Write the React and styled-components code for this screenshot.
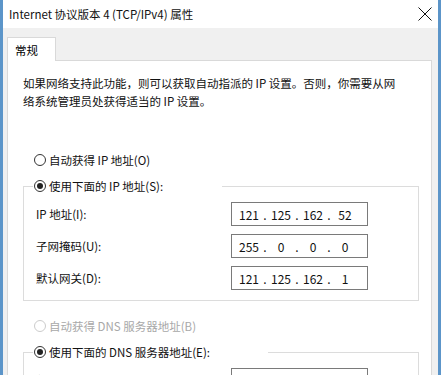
import React from 'react';
import styled, { createGlobalStyle } from 'styled-components';

const GlobalStyle = createGlobalStyle`
  html, body {
    margin: 0;
    padding: 0;
    background: #ffffff;
  }
  body {
    font-family: "Noto Sans CJK SC", "Noto Sans", sans-serif;
    color: #000;
  }
`;

const ipRows = [
  { label: 'IP 地址(I):', value: ['121', '125', '162', '52'] },
  { label: '子网掩码(U):', value: ['255', '0', '0', '0'] },
  { label: '默认网关(D):', value: ['121', '125', '162', '1'] },
];

const dnsRows = [
  { label: '首选 DNS 服务器(P):', value: null },
];

const CloseIcon = () => (
  <svg width="14" height="14" viewBox="0 0 14 14">
    <path d="M0.5 0.5 L13.5 13.5 M13.5 0.5 L0.5 13.5" stroke="#111" strokeWidth="1" fill="none" />
  </svg>
);

const Radio = ({ checked, disabled, children }) => (
  <RadioRow $disabled={disabled}>
    <Circle $disabled={disabled}>{checked && <Dot />}</Circle>
    <span>{children}</span>
  </RadioRow>
);

const IpField = ({ value }) => (
  <IpBox>
    {value &&
      value.map((v, i) => (
        <React.Fragment key={i}>
          <Part>{v}</Part>
          {i < 3 && <Sep>.</Sep>}
        </React.Fragment>
      ))}
  </IpBox>
);

const App = () => {
  return (
    <>
      <GlobalStyle />
      <Window>
        <TitleBar>
          <Title>Internet 协议版本 4 (TCP/IPv4) 属性</Title>
          <CloseIcon />
        </TitleBar>
        <Body>
          <Tab>常规</Tab>
          <Panel>
            <Desc>
              如果网络支持此功能，则可以获取自动指派的 IP 设置。否则，你需要从网
              <br />
              络系统管理员处获得适当的 IP 设置。
            </Desc>

            <Radio>自动获得 IP 地址(O)</Radio>
            <Group>
              <Legend $width={189}>
                <Radio checked>使用下面的 IP 地址(S):</Radio>
              </Legend>
              {ipRows.map((r) => (
                <Row key={r.label}>
                  <Label>{r.label}</Label>
                  <IpField value={r.value} />
                </Row>
              ))}
            </Group>

            <Spacer />
            <Radio disabled>自动获得 DNS 服务器地址(B)</Radio>
            <Group>
              <Legend $width={235}>
                <Radio checked>使用下面的 DNS 服务器地址(E):</Radio>
              </Legend>
              {dnsRows.map((r) => (
                <Row key={r.label}>
                  <Label>{r.label}</Label>
                  <IpField value={r.value} />
                </Row>
              ))}
            </Group>
          </Panel>
        </Body>
      </Window>
    </>
  );
};

export default App;

const Window = styled.div`
  width: 441px;
  height: 375px;
  box-sizing: border-box;
  border-left: 3px solid #5c95c9;
  border-right: 3px solid #5c95c9;
  display: flex;
  flex-direction: column;
  overflow: hidden;
  background: #f0f0f0;
`;

const TitleBar = styled.div`
  height: 28px;
  flex: none;
  background: #ffffff;
  display: flex;
  align-items: center;
  justify-content: space-between;
  padding: 0 6px 0 6px;
  box-sizing: border-box;
`;

const Title = styled.div`
  font-size: 11.5px;
  line-height: 16px;
  color: #111;
`;

const Body = styled.div`
  flex: 1;
  padding: 9px 6px 0 4px;
  display: flex;
  flex-direction: column;
`;

const Tab = styled.div`
  width: 49px;
  height: 24px;
  box-sizing: border-box;
  background: #ffffff;
  border: 1px solid #d9d9d9;
  border-bottom: none;
  margin-bottom: -1px;
  position: relative;
  z-index: 1;
  padding-left: 7px;
  font-size: 11.5px;
  line-height: 24px;
`;

const Panel = styled.div`
  flex: 1;
  background: #ffffff;
  border: 1px solid #d9d9d9;
  border-bottom: none;
  padding: 13px 12px 0 15px;
  display: flex;
  flex-direction: column;
  align-items: stretch;
`;

const Desc = styled.div`
  font-size: 11.5px;
  line-height: 18px;
  color: #111;
  margin-bottom: 41px;
  white-space: nowrap;
`;

const RadioRow = styled.div`
  display: flex;
  align-items: center;
  height: 18px;
  margin-left: 11px;
  gap: 3px;
  font-size: 11.5px;
  color: ${(p) => (p.$disabled ? '#a8a8a8' : '#111')};
`;

const Circle = styled.div`
  width: 12px;
  height: 12px;
  box-sizing: border-box;
  border-radius: 50%;
  border: 1px solid ${(p) => (p.$disabled ? '#cccccc' : '#333333')};
  background: #fff;
  display: flex;
  align-items: center;
  justify-content: center;
`;

const Dot = styled.div`
  width: 6px;
  height: 6px;
  border-radius: 50%;
  background: #222;
`;

const Group = styled.fieldset`
  margin: 8px 0 0 0;
  padding: 7px 12px 10px 12px;
  border: 1px solid #dcdcdc;
  display: flex;
  flex-direction: column;
  gap: 8px;
  min-width: 0;
`;

const Legend = styled.legend`
  padding: 0;
  margin-left: -3px;
  width: ${(p) => p.$width}px;
  background: #fff;

  & > div {
    margin-left: 1px;
  }
`;

const Spacer = styled.div`
  height: 16px;
  flex: none;
`;

const Row = styled.div`
  display: flex;
  align-items: center;
  height: 24px;
`;

const Label = styled.div`
  width: 195px;
  font-size: 11.5px;
  color: #111;
`;

const IpBox = styled.div`
  width: 137px;
  height: 24px;
  box-sizing: border-box;
  border: 1px solid #7a7a7a;
  display: flex;
  align-items: center;
  padding-left: 5px;
  font-size: 12px;
  color: #111;
`;

const Part = styled.span`
  width: 24px;
  text-align: center;
`;

const Sep = styled.span`
  width: 8px;
  text-align: center;
`;
